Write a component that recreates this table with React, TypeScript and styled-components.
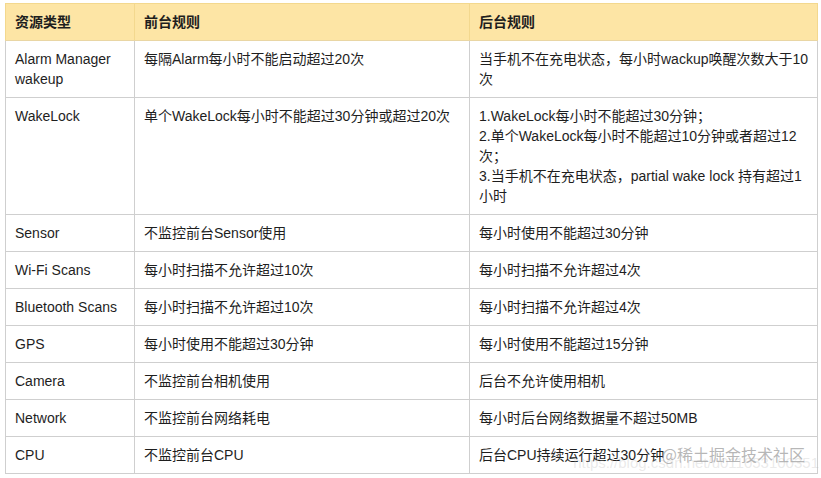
import React from "react";
import styled, { createGlobalStyle } from "styled-components";

const Global = createGlobalStyle`
  html, body { margin: 0; padding: 0; background: #ffffff; }
  body { font-family: "Liberation Sans", "Noto Sans CJK SC", sans-serif; }
`;

const Page = styled.div`
  position: relative;
  width: 821px;
  height: 478px;
  padding: 3px 4px 0 5px;
  box-sizing: border-box;
  overflow: hidden;
`;

const Table = styled.table`
  width: 812px;
  border-collapse: collapse;
  table-layout: fixed;
  font-size: 14px;
  line-height: 20px;
  color: #1e1e1e;
`;

const Col = styled.col<{ $w: number }>`
  width: ${(p) => p.$w}px;
`;

const HeadCell = styled.th`
  background: #fde5a5;
  border: 1px solid #f3d88e;
  border-bottom-color: #e9d6a4;
  padding: 8px 9px;
  text-align: left;
  font-weight: 700;
  vertical-align: top;
`;

const Cell = styled.td<{ $tight?: boolean }>`
  border: 1px solid #cfcfcf;
  padding: 8px ${(p) => (p.$tight ? 5 : 9)}px 8px 9px;
  vertical-align: top;
  word-break: break-word;
`;

const Watermark = styled.div`
  position: absolute;
  right: 16px;
  bottom: 14px;
  font-family: "Noto Sans CJK SC", "Liberation Sans", sans-serif;
  font-size: 16px;
  line-height: 20px;
  color: rgba(160, 160, 160, 0.75);
  pointer-events: none;
`;

const FaintUrl = styled.div`
  position: absolute;
  right: 2px;
  bottom: 7px;
  font-family: "Liberation Sans", sans-serif;
  font-size: 15px;
  color: rgba(185, 185, 185, 0.3);
  pointer-events: none;
`;

const rows: [string, string, React.ReactNode][] = [
  ["Alarm Manager wakeup", "每隔Alarm每小时不能启动超过20次", "当手机不在充电状态，每小时wackup唤醒次数大于10次"],
  [
    "WakeLock",
    "单个WakeLock每小时不能超过30分钟或超过20次",
    <>
      1.WakeLock每小时不能超过30分钟；
      <br />
      2.单个WakeLock每小时不能超过10分钟或者超过12次；
      <br />
      3.当手机不在充电状态，partial wake lock 持有超过1小时
    </>,
  ],
  ["Sensor", "不监控前台Sensor使用", "每小时使用不能超过30分钟"],
  ["Wi-Fi Scans", "每小时扫描不允许超过10次", "每小时扫描不允许超过4次"],
  ["Bluetooth Scans", "每小时扫描不允许超过10次", "每小时扫描不允许超过4次"],
  ["GPS", "每小时使用不能超过30分钟", "每小时使用不能超过15分钟"],
  ["Camera", "不监控前台相机使用", "后台不允许使用相机"],
  ["Network", "不监控前台网络耗电", "每小时后台网络数据量不超过50MB"],
  ["CPU", "不监控前台CPU", "后台CPU持续运行超过30分钟"],
];

export default function App() {
  return (
    <Page>
      <Global />
      <Table>
        <colgroup>
          <Col $w={129} />
          <Col $w={335} />
          <Col $w={348} />
        </colgroup>
        <thead>
          <tr>
            <HeadCell>资源类型</HeadCell>
            <HeadCell>前台规则</HeadCell>
            <HeadCell>后台规则</HeadCell>
          </tr>
        </thead>
        <tbody>
          {rows.map((r, i) => (
            <tr key={i}>
              <Cell>{r[0]}</Cell>
              <Cell>{r[1]}</Cell>
              <Cell $tight>{r[2]}</Cell>
            </tr>
          ))}
        </tbody>
      </Table>
      <FaintUrl>https://blog.csdn.net/u011053100351</FaintUrl>
      <Watermark>@稀土掘金技术社区</Watermark>
    </Page>
  );
}
